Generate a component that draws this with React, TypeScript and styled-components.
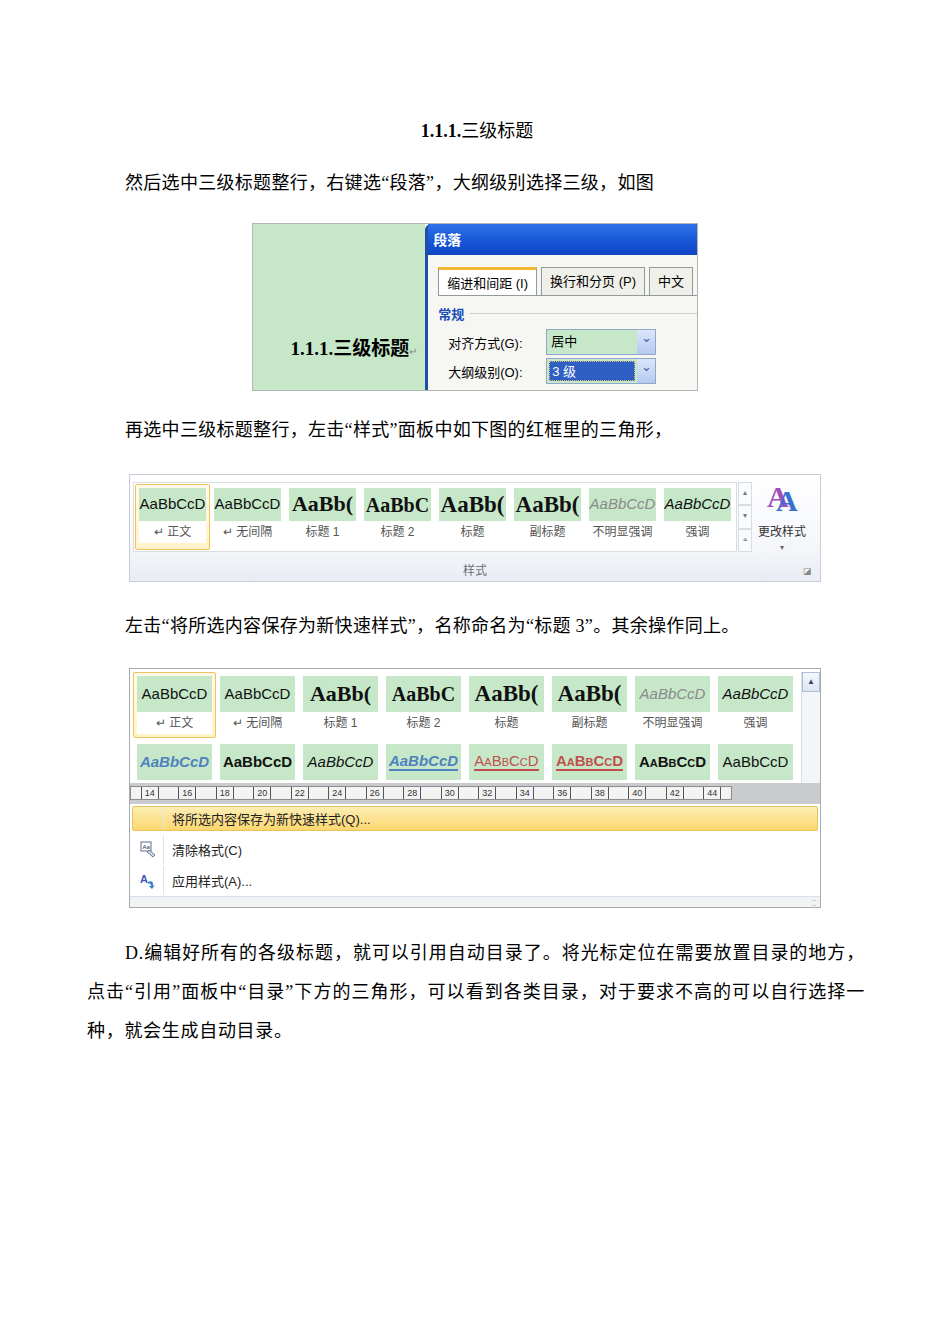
import styled, { createGlobalStyle } from "styled-components";

const Global = createGlobalStyle`
  body { margin: 0; background: #fff; }
`;

const serif = `"Liberation Serif", "Noto Sans CJK SC", serif`;
const ui = `"Liberation Sans", "Noto Sans CJK SC", sans-serif`;

type Sample = { text: string; label: string; font?: string; size?: number; weight?: number; italic?: boolean; color?: string; underline?: string; caps?: boolean };

const row1: Sample[] = [
  { text: "AaBbCcD", label: "↵ 正文" },
  { text: "AaBbCcD", label: "↵ 无间隔" },
  { text: "AaBb(", label: "标题 1", font: serif, size: 22, weight: 700 },
  { text: "AaBbC", label: "标题 2", font: serif, size: 20, weight: 700 },
  { text: "AaBb(", label: "标题", font: serif, size: 23, weight: 700 },
  { text: "AaBb(", label: "副标题", font: serif, size: 23, weight: 700 },
  { text: "AaBbCcD", label: "不明显强调", italic: true, color: "#8a8a8a" },
  { text: "AaBbCcD", label: "强调", italic: true },
];

const row2: Sample[] = [
  { text: "AaBbCcD", label: "明显强调", italic: true, weight: 700, color: "#4f81bd" },
  { text: "AaBbCcD", label: "要点", weight: 700 },
  { text: "AaBbCcD", label: "引用", italic: true },
  { text: "AaBbCcD", label: "明显引用", italic: true, weight: 700, color: "#4f81bd", underline: "#4f81bd" },
  { text: "AaBbCcD", label: "不明显参考", caps: true, color: "#c0504d", underline: "#c0504d" },
  { text: "AaBbCcD", label: "明显参考", caps: true, weight: 700, color: "#c0504d", underline: "#c0504d" },
  { text: "AaBbCcD", label: "书籍标题", caps: true, weight: 700 },
  { text: "AaBbCcD", label: "列出段落" },
];

const GalleryItem = ({ s, w, sel, h }: { s: Sample; w: number; sel?: boolean; h: number }) => (
  <Item $w={w} $sel={sel}>
    <Swatch $h={h}>
      <SampleText
        style={{
          fontFamily: s.font || ui,
          fontSize: s.size || 15,
          fontWeight: s.weight || 400,
          fontStyle: s.italic ? "italic" : "normal",
          color: s.color || "#111",
          fontVariant: s.caps ? "small-caps" : "normal",
          borderBottom: s.underline ? `2px solid ${s.underline}` : "none",
        }}
      >
        {s.text}
      </SampleText>
    </Swatch>
    <ItemLabel>{s.label}</ItemLabel>
  </Item>
);

const rulerNums = [14, 16, 18, 20, 22, 24, 26, 28, 30, 32, 34, 36, 38, 40, 42, 44];

export default function App() {
  return (
    <Page>
      <Global />
      <Heading>
        <b>1.1.1.</b>三级标题
      </Heading>
      <Para>然后选中三级标题整行，右键选“段落”，大纲级别选择三级，如图</Para>

      <Figure1>
        <GreenPane>
          <DocHeading>
            1.1.1.三级标题<Mark>↵</Mark>
          </DocHeading>
        </GreenPane>
        <Dialog>
          <TitleBar>段落</TitleBar>
          <DialogBody>
            <Tabs>
              <Tab $active>缩进和间距 (I)</Tab>
              <Tab>换行和分页 (P)</Tab>
              <Tab>中文</Tab>
            </Tabs>
            <Group>
              <GroupTitle>常规</GroupTitle>
              <GroupLine />
            </Group>
            <FieldRow>
              <FieldLabel>对齐方式(G):</FieldLabel>
              <Select>
                <SelectValue>居中</SelectValue>
                <Arrow>⌄</Arrow>
              </Select>
            </FieldRow>
            <FieldRow>
              <FieldLabel>大纲级别(O):</FieldLabel>
              <Select>
                <SelectValue $hi>3 级</SelectValue>
                <Arrow>⌄</Arrow>
              </Select>
            </FieldRow>
          </DialogBody>
        </Dialog>
      </Figure1>

      <Para>再选中三级标题整行，左击“样式”面板中如下图的红框里的三角形，</Para>

      <Figure2>
        <RibbonTop>
          <Gallery>
            {row1.map((s, i) => (
              <GalleryItem key={i} s={s} w={75} h={33} sel={i === 0} />
            ))}
          </Gallery>
          <ScrollCol>
            <ScrollBtn>▴</ScrollBtn>
            <ScrollBtn>▾</ScrollBtn>
            <ScrollBtn>⩡</ScrollBtn>
          </ScrollCol>
          <ChangeStyle>
            <BigA>
              <span>A</span>
              <span>A</span>
            </BigA>
            <ChangeLabel>更改样式</ChangeLabel>
            <SmallArrow>▾</SmallArrow>
          </ChangeStyle>
        </RibbonTop>
        <RibbonFoot>
          样式<Corner>◪</Corner>
        </RibbonFoot>
      </Figure2>

      <Para $top={31}>左击“将所选内容保存为新快速样式”，名称命名为“标题 3”。其余操作同上。</Para>

      <Figure3>
        <BigGallery>
          <Rows>
            <GRow>
              {row1.map((s, i) => (
                <GalleryItem key={i} s={s} w={83} h={36} sel={i === 0} />
              ))}
            </GRow>
            <GRow>
              {row2.map((s, i) => (
                <GalleryItem key={i} s={s} w={83} h={36} />
              ))}
            </GRow>
          </Rows>
          <VScroll>
            <UpBtn>▲</UpBtn>
          </VScroll>
        </BigGallery>
        <RulerBand>
          <Ruler>
            {rulerNums.map((n) => (
              <Tick key={n}>{n}</Tick>
            ))}
          </Ruler>
        </RulerBand>
        <Menu>
          <MenuItem $hl>
            <MenuIcon />
            将所选内容保存为新快速样式(Q)...
          </MenuItem>
          <MenuItem>
            <MenuIcon>
              <svg width="18" height="18" viewBox="0 0 18 18">
                <rect x="2" y="1" width="10" height="9" fill="#fff" stroke="#5a6f8f" />
                <text x="3.5" y="8" fontSize="6" fill="#334" fontFamily="Liberation Sans">Aa</text>
                <path d="M8 11 L14 16 L16 14 L10 9 Z" fill="#cfd8e8" stroke="#6b7b99" />
              </svg>
            </MenuIcon>
            清除格式(C)
          </MenuItem>
          <MenuItem>
            <MenuIcon>
              <svg width="18" height="18" viewBox="0 0 18 18">
                <text x="1" y="11" fontSize="11" fontWeight="700" fill="#3a58b8" fontFamily="Liberation Sans">A</text>
                <path d="M9 10 C12 8 15 10 14 14 L16 13 L13 17 L10 14 L12 14 C12 12 11 11 9 12 Z" fill="#3c7fd0" />
              </svg>
            </MenuIcon>
            应用样式(A)...
          </MenuItem>
          <MenuFoot>⁚⁚</MenuFoot>
        </Menu>
      </Figure3>

      <IndentPara>
        D.编辑好所有的各级标题，就可以引用自动目录了。将光标定位在需要放置目录的地方，点击“引用”面板中“目录”下方的三角形，可以看到各类目录，对于要求不高的可以自行选择一种，就会生成自动目录。
      </IndentPara>
    </Page>
  );
}

const Page = styled.div`
  width: 950px;
  min-height: 1344px;
  box-sizing: border-box;
  padding: 118px 85px 0 87px;
  font-family: ${serif};
  font-size: 18px;
  color: #000;
`;

const Heading = styled.div`
  text-align: center;
  font-size: 18px;
  line-height: 26px;
  margin-left: 2px;
`;

const Para = styled.p<{ $top?: number }>`
  margin: ${(p) => p.$top ?? 26}px 0 0 38px;
  line-height: 26px;
  letter-spacing: 0.3px;
`;

const IndentPara = styled.p`
  margin: 26px 0 0 0;
  line-height: 39px;
  text-indent: 38px;
  text-align: justify;
  letter-spacing: 0.7px;
`;

const Figure1 = styled.div`
  display: flex;
  width: 446px;
  height: 168px;
  margin: 27px 0 0 165px;
  border: 1px solid #b5b5b5;
  box-sizing: border-box;
  overflow: hidden;
`;

const GreenPane = styled.div`
  width: 180px;
  background: #c6e8c9;
  display: flex;
  align-items: flex-end;
  justify-content: flex-end;
  padding: 0 8px 30px 0;
  box-sizing: border-box;
`;

const DocHeading = styled.div`
  font-family: ${serif};
  font-weight: 700;
  font-size: 19px;
`;

const Mark = styled.span`
  font-size: 10px;
  font-weight: 400;
  color: #888;
`;

const Dialog = styled.div`
  flex: 1;
  border-left: 3px solid #1f4fa6;
  border-top-left-radius: 6px;
  background: #f6f6f3;
  display: flex;
  flex-direction: column;
`;

const TitleBar = styled.div`
  height: 31px;
  background: linear-gradient(#2e72e8, #1554d6 60%, #0f46c2);
  color: #fff;
  font-family: ${ui};
  font-weight: 700;
  font-size: 14px;
  line-height: 33px;
  padding-left: 5px;
`;

const DialogBody = styled.div`
  padding: 12px 0 0 10px;
  font-family: ${ui};
  font-size: 13px;
`;

const Tabs = styled.div`
  display: flex;
  border-bottom: 1px solid #919b9c;
`;

const Tab = styled.div<{ $active?: boolean }>`
  padding: 3px 8px;
  margin-right: 4px;
  white-space: nowrap;
  background: ${(p) => (p.$active ? "#fff" : "#f0f0ea")};
  border: 1px solid #919b9c;
  border-bottom: none;
  border-top: ${(p) => (p.$active ? "3px solid #f4b530" : "1px solid #919b9c")};
`;

const Group = styled.div`
  display: flex;
  align-items: center;
  gap: 6px;
  margin: 8px 0 6px 0;
`;

const GroupTitle = styled.span`
  color: #1a4fb8;
  font-weight: 700;
`;

const GroupLine = styled.div`
  flex: 1;
  height: 1px;
  background: #d0d0c8;
`;

const FieldRow = styled.div`
  display: flex;
  align-items: center;
  margin: 0 0 3px 10px;
  gap: 10px;
`;

const FieldLabel = styled.span`
  width: 88px;
`;

const Select = styled.div`
  display: flex;
  width: 108px;
  height: 24px;
  border: 1px solid #8fa8cc;
  background: #c6e8c9;
`;

const SelectValue = styled.div<{ $hi?: boolean }>`
  flex: 1;
  margin: 2px;
  padding-left: 2px;
  line-height: 20px;
  background: ${(p) => (p.$hi ? "#2f5fc4" : "transparent")};
  color: ${(p) => (p.$hi ? "#fff" : "#000")};
  border: ${(p) => (p.$hi ? "1px dotted #e0c060" : "none")};
`;

const Arrow = styled.div`
  width: 18px;
  background: linear-gradient(#dbe6fb, #b6c9ef);
  color: #3b5ea5;
  text-align: center;
  font-size: 13px;
  line-height: 16px;
`;

const Figure2 = styled.div`
  width: 692px;
  height: 108px;
  margin: 31px 0 0 42px;
  border: 1px solid #c7ccd6;
  box-sizing: border-box;
  background: linear-gradient(#fff, #f4f6fa 70%, #e9ecf2);
  display: flex;
  flex-direction: column;
`;

const RibbonTop = styled.div`
  display: flex;
  padding: 7px 0 0 3px;
`;

const Gallery = styled.div`
  display: flex;
  border: 1px solid #d8dce4;
  background: #fff;
  padding: 1px;
`;

const Item = styled.div<{ $w: number; $sel?: boolean }>`
  width: ${(p) => p.$w}px;
  box-sizing: border-box;
  padding: 3px;
  border: 1px solid ${(p) => (p.$sel ? "#f2c25a" : "transparent")};
  border-radius: 2px;
  background: ${(p) => (p.$sel ? "linear-gradient(#fffbe8, #fff4c8)" : "transparent")};
  display: flex;
  flex-direction: column;
  align-items: stretch;
`;

const Swatch = styled.div<{ $h: number }>`
  height: ${(p) => p.$h}px;
  background: #c6e8c9;
  display: flex;
  align-items: center;
  justify-content: center;
  overflow: hidden;
`;

const SampleText = styled.span`
  white-space: nowrap;
  line-height: 1.1;
`;

const ItemLabel = styled.div`
  text-align: center;
  font-family: ${ui};
  font-size: 12px;
  color: #555;
  line-height: 22px;
  background: #fff;
`;

const ScrollCol = styled.div`
  display: flex;
  flex-direction: column;
  width: 14px;
  margin-left: 1px;
`;

const ScrollBtn = styled.div`
  flex: 1;
  border: 1px solid #d8dce4;
  font-size: 8px;
  color: #777;
  text-align: center;
  line-height: 20px;
  background: #fafbfd;
`;

const ChangeStyle = styled.div`
  display: flex;
  flex-direction: column;
  align-items: center;
  width: 60px;
  font-family: ${ui};
`;

const BigA = styled.div`
  position: relative;
  width: 34px;
  height: 38px;
  font-family: ${serif};
  font-size: 30px;
  font-weight: 700;
  span:first-child {
    position: absolute;
    left: 2px;
    top: -2px;
    color: #a04dbb;
  }
  span:last-child {
    position: absolute;
    left: 11px;
    top: 2px;
    color: #3a6fd0;
  }
`;

const ChangeLabel = styled.div`
  font-size: 12px;
  color: #333;
  margin-top: 2px;
`;

const SmallArrow = styled.div`
  font-size: 8px;
  color: #666;
  margin-top: 4px;
`;

const RibbonFoot = styled.div`
  margin-top: auto;
  height: 22px;
  text-align: center;
  font-family: ${ui};
  font-size: 12px;
  color: #6a6f78;
  line-height: 24px;
  position: relative;
`;

const Corner = styled.span`
  position: absolute;
  right: 8px;
  font-size: 9px;
  color: #888;
`;

const Figure3 = styled.div`
  width: 692px;
  height: 240px;
  margin: 29px 0 0 42px;
  border: 1px solid #a7abb0;
  box-sizing: border-box;
  display: flex;
  flex-direction: column;
  overflow: hidden;
  background: #fff;
`;

const BigGallery = styled.div`
  display: flex;
  padding: 3px 0 0 3px;
  height: 117px;
  box-sizing: border-box;
  overflow: hidden;
`;

const Rows = styled.div`
  display: flex;
  flex-direction: column;
  gap: 2px;
  width: 668px;
`;

const GRow = styled.div`
  display: flex;
`;

const VScroll = styled.div`
  width: 18px;
  border-left: 1px solid #d8dce4;
  background: #f3f5f9;
`;

const UpBtn = styled.div`
  height: 18px;
  border: 1px solid #b0bfd8;
  background: linear-gradient(#f5f8fd, #dbe5f3);
  font-size: 8px;
  color: #445;
  text-align: center;
  line-height: 18px;
`;

const RulerBand = styled.div`
  height: 22px;
  background: #c9cbcf;
  display: flex;
  align-items: center;
`;

const Ruler = styled.div`
  width: 600px;
  height: 12px;
  background: #f3f3f3;
  border: 1px solid #8c8c8c;
  display: flex;
  justify-content: space-around;
  font-family: ${ui};
  font-size: 9px;
  line-height: 12px;
  color: #333;
`;

const Tick = styled.span`
  padding: 0 3px;
  border-left: 1px solid #555;
  border-right: 1px solid #555;
`;

const Menu = styled.div`
  flex: 1;
  display: flex;
  flex-direction: column;
  font-family: ${ui};
  font-size: 13px;
  color: #222;
`;

const MenuItem = styled.div<{ $hl?: boolean }>`
  display: flex;
  align-items: center;
  height: ${(p) => (p.$hl ? 23 : 29)}px;
  margin: ${(p) => (p.$hl ? "2px 2px 3px" : "0 2px")};
  background: ${(p) => (p.$hl ? "linear-gradient(#fdeeb4, #fbd76f)" : "transparent")};
  border: 1px solid ${(p) => (p.$hl ? "#e8c35c" : "transparent")};
  border-radius: 2px;
`;

const MenuIcon = styled.div`
  width: 30px;
  height: 100%;
  margin-right: 8px;
  border-right: 1px solid #e2e4e8;
  display: flex;
  align-items: center;
  justify-content: center;
`;

const MenuFoot = styled.div`
  margin-top: auto;
  height: 10px;
  background: #f2f3f5;
  border-top: 1px solid #dde;
  text-align: right;
  font-size: 8px;
  color: #999;
  padding-right: 4px;
`;
